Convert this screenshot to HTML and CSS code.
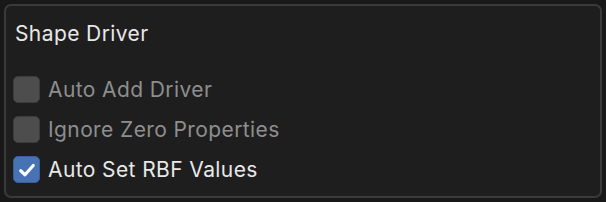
FILE: index.html
```html
<!DOCTYPE html>
<html lang="en">
<head>
  <meta charset="UTF-8" />
  <title>Shape Driver</title>
  <link rel="stylesheet" href="styles.css">
</head>
<body>
  <div class="panel">
    <div class="panel-title">Shape Driver</div>
    <div class="options">
      <label class="option disabled">
        <span class="check"></span>
        <span>Auto Add Driver</span>
      </label>
      <label class="option disabled">
        <span class="check"></span>
        <span>Ignore Zero Properties</span>
      </label>
      <label class="option">
        <span class="check on">
          <svg viewBox="0 0 16 16" width="20" height="20"><path d="M3 8.6 L6.4 11.8 L13 4.4" fill="none" stroke="#fff" stroke-width="2.5" stroke-linecap="round" stroke-linejoin="round"/></svg>
        </span>
        <span>Auto Set RBF Values</span>
      </label>
    </div>
  </div>
</body>
</html>
```

FILE: styles.css
```css
* { box-sizing: border-box; margin: 0; padding: 0; }
body {
  background: #181818;
  padding: 4px;
  height: 202px;
  font-family: Inter, "Noto Sans", sans-serif;
  color: #e8e8e8;
}
.panel {
  height: 194px;
  background: #1e1e1e;
  border: 2px solid #3a3a3a;
  border-radius: 7px;
  padding: 13px 10px 0 7px;
}
.panel-title {
  font-size: 21px;
  letter-spacing: 0.4px;
  line-height: 30px;
  padding-left: 2px;
}
.options {
  display: flex;
  flex-direction: column;
  gap: 13px;
  margin-top: 27px;
}
.option {
  display: flex;
  align-items: center;
  gap: 8px;
  font-size: 21px;
  letter-spacing: 0.4px;
  line-height: 27px;
}
.option.disabled { color: #8e8e8e; }
.check {
  width: 27px;
  height: 27px;
  border-radius: 5px;
  background: #4d4d4d;
  border: 1px solid #3c3c3c;
  display: flex;
  align-items: center;
  justify-content: center;
}
.check.on {
  background: #4772b3;
  border-color: #3b5f96;
}
```
